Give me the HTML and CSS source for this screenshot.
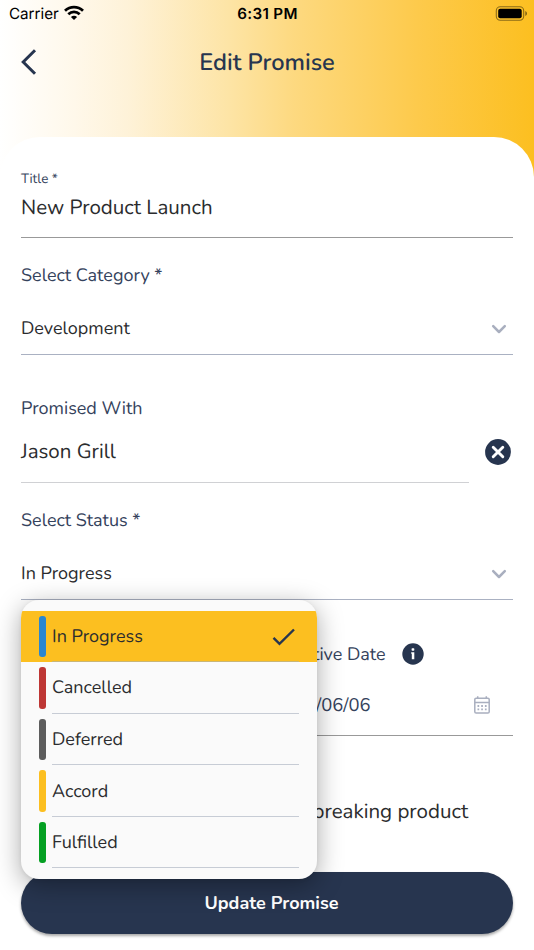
FILE: index.html
```html
<!DOCTYPE html>
<html lang="en">
<head>
<meta charset="utf-8">
<meta name="viewport" content="width=device-width, initial-scale=1">
<title>Edit Promise</title>
<link rel="stylesheet" href="styles.css">
</head>
<body>
<div class="screen">
  <header class="hero">
    <div class="status">
      <div class="carrier"><span>Carrier</span>
        <svg width="20" height="16" viewBox="0 0 20 16" fill="none" stroke="#000" stroke-width="2.8"><path d="M1 5.8C6.200.9 13.800.9 19 5.800"/><path d="M4.300 9.200C7.600 6.200 12.400 6.200 15.700 9.200"/><path d="M10 15L6.900 11.900C8.600 10.200 11.400 10.200 13.100 11.900Z" fill="#000" stroke="none"/></svg>
      </div>
      <span class="time">6:31 PM</span>
      <svg class="battery" width="33" height="16" viewBox="0 0 33 16"><rect x="1.300" y=".8" width="27.400" height="13.400" rx="4" fill="none" stroke="#000" stroke-opacity=".45" stroke-width="1.100"/><rect x="3.200" y="2.700" width="23.500" height="9.600" rx="2"/><path d="M30.300 5v5q1.700-.7 1.700-2.500T30.300 5Z" fill-opacity=".5"/></svg>
    </div>
    <div class="nav">
      <svg class="back" width="16" height="26" viewBox="0 0 16 26" fill="none" stroke="#27354f" stroke-width="3"><path d="M14 1.200L2.200 13L14 24.800"/></svg>
      <h1>Edit Promise</h1>
    </div>
  </header>
  <main class="sheet">
    <section class="field title-field">
      <label><span class="tiny">Title *</span></label>
      <div class="value"><span class="large">New Product Launch</span></div>
    </section>
    <section class="field select-field">
      <label><span class="label">Select Category *</span></label>
      <div class="value"><span class="medium">Development</span><svg class="chev" width="16" height="11" viewBox="0 0 16 11"><path d="M2.200 2.200L8 8L13.800 2.200"/></svg></div>
    </section>
    <section class="field person-field">
      <label><span class="label">Promised With</span></label>
      <div class="person">
        <div class="value"><span class="large">Jason Grill</span></div>
        <svg class="clear" width="26" height="26" viewBox="0 0 26 26"><circle cx="13" cy="13" r="12.900" fill="#27354f"/><path d="M8.200 8.200l9.600 9.600m0-9.600l-9.600 9.600" stroke="#fff" stroke-width="2.900" stroke-linecap="round"/></svg>
      </div>
    </section>
    <section class="field select-field status-field">
      <label><span class="label">Select Status *</span></label>
      <div class="value"><span class="medium">In Progress</span><svg class="chev" width="16" height="11" viewBox="0 0 16 11"><path d="M2.200 2.200L8 8L13.800 2.200"/></svg></div>
      <ul class="menu">
        <li class="selected"><i class="bar blue"></i><div class="option"><span class="medium">In Progress</span><svg width="24" height="18" viewBox="0 0 24 18" fill="none" stroke="#27354f" stroke-width="2.400"><path d="M1.500 9.800L7.500 15.800L22 1.500"/></svg></div></li>
        <li><i class="bar red"></i><div class="option"><span class="medium">Cancelled</span></div></li>
        <li><i class="bar gray"></i><div class="option"><span class="medium">Deferred</span></div></li>
        <li><i class="bar yellow"></i><div class="option"><span class="medium">Accord</span></div></li>
        <li><i class="bar green"></i><div class="option"><span class="medium">Fulfilled</span></div></li>
      </ul>
    </section>
    <section class="field date-field">
      <label><span class="label">tive Date</span><svg width="22" height="22" viewBox="0 0 22 22"><circle cx="11" cy="11" r="10.700" fill="#27354f"/><g fill="#fff"><rect x="9.600" y="5.300" width="2.700" height="2.400" rx=".6"/><path d="M9.200 9.200h3.100v7.100H9.800v-5.600h-.6z"/></g></svg></label>
      <div class="value"><span class="label">/06/06</span><svg width="16" height="18" viewBox="0 0 16 18" fill="none" stroke="#a9afbf"><rect x=".8" y="2.300" width="14.400" height="14.700" rx="1.300" stroke-width="1.500"/><path d="M.8 6.500h14.400M3.700.3v2.200M12.300.3v2.200" stroke-width="1.500"/><path d="M3.500 10h9.500M3.500 13.400h9.500" stroke-width="1.800" stroke-dasharray="1.700 2"/></svg></div>
    </section>
    <p class="desc"><span class="large">breaking product</span></p>
    <button class="submit">Update Promise</button>
  </main>
</div>
</body>
</html>
```
FILE: styles.css
```css
* { box-sizing: border-box; }
body { margin: 0; background: #fff; font-family: Nunito, Lato, sans-serif; font-weight: 400; color: #2b2c2e; text-rendering: geometricPrecision; }
span { white-space: nowrap; }
svg { flex: none; display: block; }
.screen { width: 534px; height: 950px; overflow: hidden; }
.hero { height: 187px; background: linear-gradient(90deg, #fff 0%, #fff8ea 14%, #fef2d8 24%, #fde4a5 43%, #fdd980 55%, #fdca4c 78%, #fcbf20 100%); }
.status { height: 27px; display: grid; grid-template-columns: 1fr 1fr 1fr; align-items: center; padding: 0 6px 0 9px; font-family: Inter, sans-serif; color: #000; }
.carrier { display: flex; align-items: center; gap: 6px; font-size: 15.200px; }
.carrier svg { margin: -2px 0 0 -1px; }
.time { text-align: center; font-size: 15.200px; font-weight: 560; letter-spacing: .350px; padding-right: 2px; }
.battery { justify-self: end; }
.nav { height: 70px; display: grid; grid-template-columns: 60px 1fr 60px; align-items: center; }
.back { margin-left: 20.500px; }
h1 { margin: 0; padding-top: 1px; text-align: center; font-size: 23.600px; line-height: 30px; font-weight: 650; color: #27354f; }
.sheet { margin-top: -50px; height: 813px; background: #fff; border-radius: 40px 40px 0 0; padding: 31px 21px 0; }
.field label { display: flex; align-items: center; color: #34425c; }
.value { display: flex; align-items: center; }
.value span { padding-top: 2px; }
.tiny { font-size: 13.400px; }
.label { font-size: 18px; }
.medium { font-size: 18px; }
.large { font-size: 20.500px; }
.title-field { height: 70px; border-bottom: 1.500px solid #999; }
.title-field label { height: 21px; }
.title-field .value { height: 36px; }
.select-field { height: 117px; padding-top: 25px; border-bottom: 1px solid #aab1c2; }
.select-field label { height: 25px; }
.select-field .value { height: 80px; justify-content: space-between; }
.chev { margin: 2px 6px 0 0; fill: none; stroke: #a9afbf; stroke-width: 2.500; stroke-linecap: round; stroke-linejoin: round; }
.person-field { height: 128px; padding-top: 41px; }
.person-field label { height: 26px; }
.person { display: flex; align-items: center; justify-content: space-between; height: 61px; }
.person .value { width: 448px; height: 61px; padding-bottom: 2px; border-bottom: 1px solid #d0d1d4; }
.clear { margin: -2px 2.500px 0 0; }
.status-field { position: relative; }
.menu { position: absolute; z-index: 2; left: 0; top: 117px; width: 296px; height: 278.500px; margin: 0; padding: 10.500px 0 0; list-style: none; background: #fafafa; border-radius: 18px; overflow: hidden; box-shadow: 0 6px 26px rgba(0,0,0,.34), 0 1px 4px rgba(0,0,0,.06); }
.menu li { height: 51.600px; display: flex; align-items: center; padding: 0 18px; }
.menu .selected { background: #fcbf20; }
.bar { width: 6.500px; height: 41.500px; border-radius: 3px; margin-right: 6.500px; }
.option { flex: 1; height: 100%; display: flex; align-items: center; justify-content: space-between; border-bottom: 1px solid #c7ccd5; }
.option span { padding-top: 2px; }
.option svg { margin: 2px 3px 0 0; }
.selected .option { border-color: #c9b676; }
.blue { background: #2a86cf; }
.red { background: #be3735; }
.gray { background: #5d5d5d; }
.yellow { background: #fcbf20; }
.green { background: #05a023; }
.date-field { height: 136px; padding-top: 41px; border-bottom: 1.500px solid #999; }
.date-field label { height: 27px; padding-left: 292px; }
.date-field label svg { margin: -1px 0 0 16px; }
.date-field .value { height: 74px; padding: 0 23px 0 295px; justify-content: space-between; color: #34425c; }
.date-field .value .label { font-size: 18.400px; padding-top: 0; }
.desc { height: 30px; margin: 61px 0 0; padding-left: 291.500px; display: flex; align-items: center; }
.submit { display: flex; align-items: center; justify-content: center; width: 492px; height: 62px; margin-top: 45px; padding: 0 0 1px 9px; border: 0; border-radius: 31px; background: #27354f; color: #fff; font-family: inherit; font-size: 18px; font-weight: 700; box-shadow: 0 2px 3px rgba(0,0,0,.35); }
```
